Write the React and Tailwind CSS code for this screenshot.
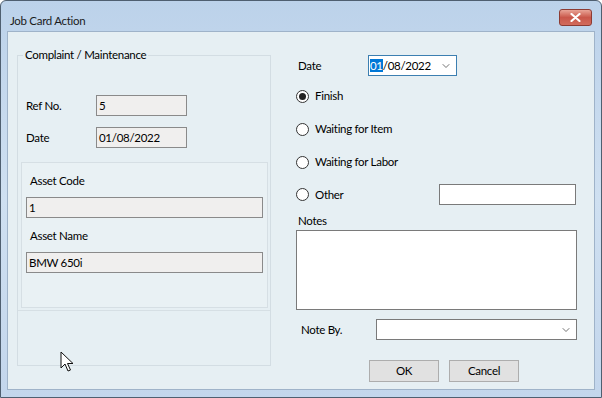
import { ChevronDown } from 'lucide-react';

const font = { fontFamily: 'Lato, "Noto Sans", sans-serif' };

function ReadOnlyField({ value, className = '' }) {
  return (
    <div className={`flex items-center border border-[#8a8a8a] bg-[#f0efee] pl-[2px] text-[11.5px] text-black ${className}`}>
      {value}
    </div>
  );
}

function Radio({ label, checked }) {
  return (
    <div className="flex items-center gap-[6px]">
      <span className="flex h-[13px] w-[13px] items-center justify-center rounded-full border border-[#333] bg-white">
        {checked ? <span className="h-[7px] w-[7px] rounded-full bg-[#222]" /> : null}
      </span>
      <span className="text-[11.5px] text-black">{label}</span>
    </div>
  );
}

function Cursor() {
  return (
    <svg className="absolute left-[52px] top-[319px]" width="16" height="23" viewBox="0 0 16 23">
      <path d="M1 1 L1 17 L5 13 L8 20 L10.5 19 L7.5 12.5 L13 12.5 Z" fill="#fff" stroke="#111" strokeWidth="1" strokeLinejoin="round" />
    </svg>
  );
}

export default function App() {
  return (
    <div style={font} className="relative h-[398px] w-[602px] overflow-hidden rounded-t-[6px] border border-[#4f5f70] bg-gradient-to-b from-[#bcd2ea] via-[#cfe0f1] to-[#c3d6ec] tracking-[-0.3px]">
      <div className="flex h-[30px] justify-between pl-[9px] pr-[9px]">
        <span className="pt-[12px] text-[11.5px] leading-[16px] text-[#1b1b1b]">Job Card Action</span>
        <div className="mt-[8px] flex h-[17px] w-[33px] items-center justify-center rounded-[3px] border border-[#8d3b33] bg-gradient-to-b from-[#e8a497] via-[#c9574a] to-[#d26b5c]">
          <svg width="11" height="9" viewBox="0 0 11 9">
            <path d="M1.5 1 L9.5 8 M9.5 1 L1.5 8" stroke="#fff" strokeWidth="2.2" strokeLinecap="round" />
          </svg>
        </div>
      </div>
      <div className="relative mx-[6px] flex h-[359px] border border-[#9fb3c9] bg-[#e6eff3]">
        <div className="relative ml-[9px] mt-[23px] h-[311px] w-[254px] border border-[#d3dde3]">
          <span className="absolute left-[5px] top-[-10px] bg-[#e6eff3] px-[2px] text-[11.5px] text-black">Complaint / Maintenance</span>
          <div className="mt-[39px] flex h-[21px] items-center">
            <span className="ml-[8px] w-[70px] text-[11.5px] text-black">Ref No.</span>
            <ReadOnlyField value="5" className="h-[21px] w-[91px]" />
          </div>
          <div className="mt-[11px] flex h-[21px] items-center">
            <span className="ml-[8px] w-[70px] text-[11.5px] text-black">Date</span>
            <ReadOnlyField value="01/08/2022" className="h-[21px] w-[91px]" />
          </div>
          <div className="ml-[3px] mt-[14px] h-[146px] w-[247px] border border-[#d6dfe4] bg-[#e9f1f4] px-[4px]">
            <div className="ml-[4px] mt-[10px] text-[11.5px] leading-[16px] text-black">Asset Code</div>
            <ReadOnlyField value="1" className="mt-[8px] h-[21px] w-[237px]" />
            <div className="ml-[4px] mt-[10px] text-[11.5px] leading-[16px] text-black">Asset Name</div>
            <ReadOnlyField value="BMW 650i" className="mt-[8px] h-[21px] w-[237px]" />
          </div>
          <div className="mt-[2px] border-t border-[#d6dfe4]" />
        </div>

        <div className="ml-[25px] mt-[23px] flex w-[281px] flex-col">
          <div className="flex h-[21px] items-center">
            <span className="ml-[2px] w-[70px] text-[11.5px] text-black">Date</span>
            <div className="flex h-[21px] w-[89px] items-center justify-between border border-[#3c7fb1] bg-white pr-[4px] text-[11.5px] text-black">
              <span className="pl-[1px]">
                <span className="bg-[#0078d7] text-white">01</span>/08/2022
              </span>
              <ChevronDown size={12} strokeWidth={1.5} className="text-[#444]" />
            </div>
          </div>
          <div className="mt-[10px] flex h-[20px] items-center">
            <Radio label="Finish" checked />
          </div>
          <div className="mt-[13px] flex h-[20px] items-center">
            <Radio label="Waiting for Item" />
          </div>
          <div className="mt-[13px] flex h-[20px] items-center">
            <Radio label="Waiting for Labor" />
          </div>
          <div className="mt-[12px] flex h-[21px] items-center justify-between">
            <Radio label="Other" />
            <div className="mr-[1px] h-[21px] w-[137px] border border-[#7a7a7a] bg-white" />
          </div>
          <div className="ml-[2px] mt-[8px] h-[16px] text-[11.5px] leading-[16px] text-black">Notes</div>
          <div className="mt-[1px] h-[80px] w-[281px] border border-[#7a7a7a] bg-white" />
          <div className="mt-[9px] flex h-[21px] items-center">
            <span className="ml-[5px] w-[75px] text-[11.5px] text-black">Note By.</span>
            <div className="flex h-[21px] w-[201px] items-center justify-end border border-[#7a7a7a] bg-white pr-[4px]">
              <ChevronDown size={12} strokeWidth={1.5} className="text-[#444]" />
            </div>
          </div>
          <div className="mt-[20px] flex gap-[10px] pl-[73px]">
            <button type="button" className="h-[22px] w-[70px] border border-[#adadad] bg-[#e1e1e1] text-[11.5px] text-black">OK</button>
            <button type="button" className="h-[22px] w-[70px] border border-[#adadad] bg-[#e1e1e1] text-[11.5px] text-black">Cancel</button>
          </div>
        </div>
        <Cursor />
      </div>
    </div>
  );
}
